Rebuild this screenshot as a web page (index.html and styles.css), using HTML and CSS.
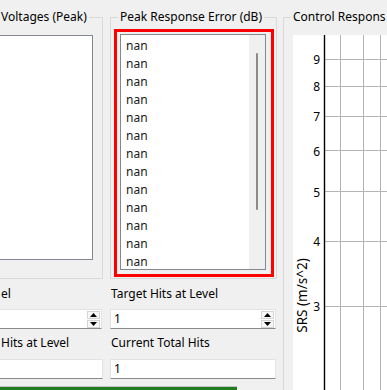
FILE: index.html
```html
<!DOCTYPE html>
<html lang="en">
<head>
  <meta charset="UTF-8" />
  <title>Vibration Control</title>
  <link rel="stylesheet" href="styles.css">
</head>
<body>
  <div class="window">
    <!-- Left area: result groups and hit counters -->
    <div class="left-area">
      <div class="top-row">
        <div class="group group-voltages">
          <div class="group-title">Voltages (Peak)</div>
          <div class="voltage-list"></div>
        </div>

        <div class="group group-error">
          <div class="group-title">Peak Response Error (dB)</div>
          <div class="error-frame">
            <div class="listbox">
              <div class="items" id="error-items"></div>
              <div class="scrollbar"><div class="thumb"></div></div>
            </div>
          </div>
        </div>
      </div>

      <div class="form-row">
        <div class="form-col form-col-left">
          <div class="field-label">el</div>
          <div class="spinbox">
            <span class="value"></span>
            <div class="spin-buttons">
              <div class="spin-btn"><svg width="7" height="4" viewBox="0 0 7 4"><path d="M0 4 L3.5 0 L7 4 Z" fill="#000"/></svg></div>
              <div class="spin-btn"><svg width="7" height="4" viewBox="0 0 7 4"><path d="M0 0 L7 0 L3.5 4 Z" fill="#000"/></svg></div>
            </div>
          </div>
          <div class="field-label second">Hits at Level</div>
          <div class="textbox"><span class="value"></span></div>
        </div>

        <div class="form-col">
          <div class="field-label">Target Hits at Level</div>
          <div class="spinbox">
            <span class="value">1</span>
            <div class="spin-buttons">
              <div class="spin-btn"><svg width="7" height="4" viewBox="0 0 7 4"><path d="M0 4 L3.5 0 L7 4 Z" fill="#000"/></svg></div>
              <div class="spin-btn"><svg width="7" height="4" viewBox="0 0 7 4"><path d="M0 0 L7 0 L3.5 4 Z" fill="#000"/></svg></div>
            </div>
          </div>
          <div class="field-label second">Current Total Hits</div>
          <div class="textbox"><span class="value">1</span></div>
        </div>
      </div>

      <div class="progress"></div>
    </div>

    <!-- Right area: response plot -->
    <div class="group group-plot">
      <div class="group-title">Control Respons</div>
      <div class="plot">
        <svg width="94" height="355" viewBox="0 0 94 355">
          <g stroke="#b4b4b4" stroke-width="1">
            <line x1="47.5" y1="0" x2="47.5" y2="355"/>
            <line x1="70.5" y1="0" x2="70.5" y2="355"/>
            <line x1="87.5" y1="0" x2="87.5" y2="355"/>
            <line x1="31" y1="24.5" x2="94" y2="24.5"/>
            <line x1="31" y1="51.5" x2="94" y2="51.5"/>
            <line x1="31" y1="81.5" x2="94" y2="81.5"/>
            <line x1="31" y1="115.5" x2="94" y2="115.5"/>
            <line x1="31" y1="156.5" x2="94" y2="156.5"/>
            <line x1="31" y1="206.5" x2="94" y2="206.5"/>
            <line x1="31" y1="271.5" x2="94" y2="271.5"/>
          </g>
          <line x1="31.5" y1="0" x2="31.5" y2="355" stroke="#000" stroke-width="1.4"/>
          <g class="tick-labels" text-anchor="end">
            <text x="27" y="29">9</text>
            <text x="27" y="56">8</text>
            <text x="27" y="86">7</text>
            <text x="27" y="120.5">6</text>
            <text x="27" y="161.5">5</text>
            <text x="27" y="211">4</text>
            <text x="27" y="276">3</text>
          </g>
          <text class="axis-label" text-anchor="middle" transform="translate(13.5,260.5) rotate(-90)">SRS (m/s^2)</text>
        </svg>
      </div>
    </div>
  </div>

  <script>
    // Fill the error list with placeholder values.
    const errorItems = document.getElementById('error-items');
    for (let i = 0; i < 13; i++) {
      const row = document.createElement('div');
      row.textContent = 'nan';
      errorItems.appendChild(row);
    }
  </script>
</body>
</html>
```

FILE: styles.css
```css
/* Page */
* {
  box-sizing: border-box;
}
body {
  margin: 0;
  width: 387px;
  height: 390px;
  overflow: hidden;
  background-color: #f0f0f0;
  color: #000;
  font-family: "Noto Sans", "Open Sans", sans-serif;
  font-size: 12px;
  line-height: 16px;
}

.window {
  display: flex;
  align-items: flex-start;
  width: 387px;
  height: 390px;
  overflow: hidden;
}

.left-area {
  width: 277px;
  flex: none;
}

/* Group boxes */
.top-row {
  display: flex;
  gap: 7px;
  margin-top: 17px;
  height: 262px;
}
.group {
  border: 1px solid #d8d8d8;
}
.group-title {
  width: fit-content;
  margin: -9px 0 0 7px;
  padding: 0 2px;
  background-color: #f0f0f0;
  line-height: 16px;
  white-space: nowrap;
}

.group-voltages {
  width: 103px;
  border-left: none;
}
.group-voltages .group-title {
  margin-left: 0;
  padding-left: 1px;
}
.voltage-list {
  height: 225px;
  margin: 10px 9px 0 0;
  background-color: #fff;
  border: 1px solid #828790;
  border-left: none;
}

.group-error {
  width: 167px;
}
.error-frame {
  margin: 4px 2px 0 3px;
  border: 3px solid #ff0000;
  padding: 2px 5px 4px 3px;
}
.listbox {
  height: 236px;
  display: flex;
  background-color: #fff;
  border: 1px solid #828790;
}
.items {
  flex: 1;
  overflow: hidden;
  padding: 2px 0 0 5px;
  color: #1a1a1a;
}
.items div {
  line-height: 18px;
}
.scrollbar {
  width: 16px;
  background-color: #f0f0f0;
}
.thumb {
  width: 2px;
  height: 157px;
  margin: 18px auto 0;
  border-radius: 1px;
  background-color: #8a8a8a;
}

/* Hit counters */
.form-row {
  display: flex;
  gap: 8px;
  margin-top: 7px;
}
.form-col {
  width: 166px;
}
.form-col-left {
  width: 102px;
}
.field-label {
  padding-left: 1px;
  line-height: 16px;
}
.field-label.second {
  margin-top: 6px;
}
.spinbox,
.textbox {
  height: 20px;
  display: flex;
  align-items: center;
  padding-left: 3px;
  background-color: #fff;
  border: 1px solid #e3e3e3;
  border-bottom-color: #8a8a8a;
}
.spinbox {
  margin-top: 7px;
}
.textbox {
  margin-top: 8px;
}
.form-col-left .spinbox,
.form-col-left .textbox {
  border-left: none;
}
.form-col-left .textbox {
  width: 103px;
}
.spin-buttons {
  margin-left: auto;
  margin-right: 1px;
  display: flex;
  flex-direction: column;
  gap: 1px;
}
.spin-btn {
  width: 13px;
  height: 8px;
  display: flex;
  align-items: center;
  justify-content: center;
  background-color: #f7f7f7;
  border: 1px solid #d4d4d4;
}
.spin-btn svg {
  display: block;
}

.progress {
  width: 237px;
  height: 4px;
  margin-top: 7px;
  background-color: #1f7d1f;
  border-top: 1px solid #c4c4c4;
}

/* Plot */
.group-plot {
  flex: none;
  width: 104px;
  height: 373px;
  margin: 17px 0 0 6px;
  border-right: none;
  border-bottom: none;
}
.plot {
  margin: 10px 0 0 9px;
  background-color: #fff;
  height: 355px;
}
.plot svg {
  display: block;
}
.tick-labels text {
  font-family: "Noto Sans", sans-serif;
  font-size: 12px;
  fill: #000;
}
.axis-label {
  font-family: "Noto Sans", sans-serif;
  font-size: 13.5px;
  fill: #000;
}
```
